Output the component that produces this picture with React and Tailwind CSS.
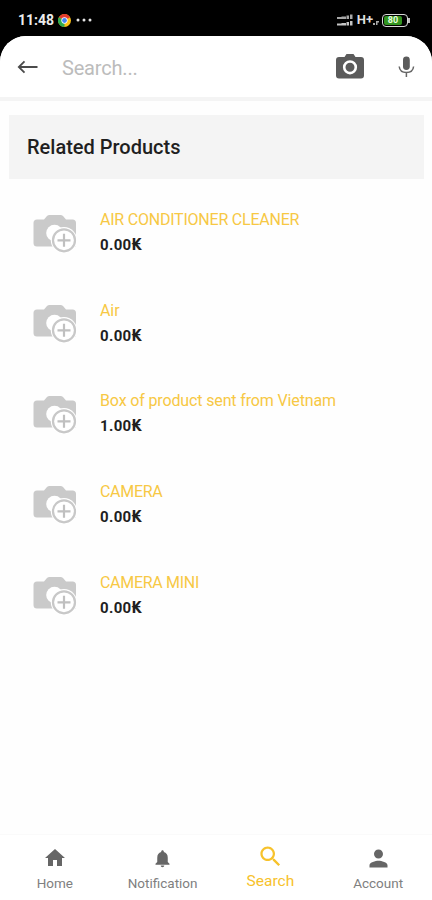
const products = [
  { name: "AIR CONDITIONER CLEANER", price: "0.00₭", spacing: "tracking-[-0.22px]" },
  { name: "Air", price: "0.00₭", spacing: "tracking-[-0.1px]" },
  { name: "Box of product sent from Vietnam", price: "1.00₭", spacing: "tracking-[-0.14px]" },
  { name: "CAMERA", price: "0.00₭", spacing: "tracking-[-0.3px]" },
  { name: "CAMERA MINI", price: "0.00₭", spacing: "tracking-[-0.3px]" },
];

function ChromeIcon() {
  return (
    <svg className="ml-1" width="13" height="13" viewBox="0 0 24 24">
      <circle cx="12" cy="12" r="12" fill="#fbc116" />
      <path d="M12 12 L1.6 6 A12 12 0 0 1 22.4 6 Z" fill="#e33b2e" />
      <path d="M12 12 L1.6 6 A12 12 0 0 0 12 24 Z" fill="#2da94f" />
      <circle cx="12" cy="12" r="5.8" fill="#fff" />
      <circle cx="12" cy="12" r="4.4" fill="#4285f4" />
    </svg>
  );
}

function StatusBar() {
  return (
    <div className="flex h-9 items-center pl-[18px] pr-[22px] pt-1 text-[#ececec]">
      <span className="w-9 whitespace-nowrap text-[14px] font-bold leading-4">11:48</span>
      <ChromeIcon />
      <svg className="ml-[5px]" width="17" height="4" viewBox="0 0 17 4" fill="#e6e6e6">
        <circle cx="2" cy="2" r="1.5" />
        <circle cx="8" cy="2" r="1.5" />
        <circle cx="14" cy="2" r="1.5" />
      </svg>
      <svg className="ml-auto" width="18" height="14" viewBox="0 0 18 14" fill="#c4c4c4">
        <path d="M0 4h4.500v2H0zM4.500 3.500H9V6H4.500zM9.500 2.500h2.500V6H9.500zM13 1.500h2.500V6H13z" opacity=".85" />
        <path d="M0 10.500h4.500v2H0zM4.500 10H9v2.500H4.500zM9.500 9H12v3.500H9.500zM13 8h2.500v4.500H13z" />
      </svg>
      <span className="ml-0.5 text-[13px] font-bold leading-4 text-[#dedede]">H+</span>
      <svg className="mt-1.5" width="6" height="6" viewBox="0 0 6 6" fill="#aaa">
        <path d="M0 3h2v2H0zM3 1h3v1.500H4.500V5H3z" />
      </svg>
      <div className="ml-[3px] flex items-center">
        <div className="flex h-[13px] w-[26px] rounded-[4px] border-[1.5px] border-[#d8d8d8] p-px">
          <div className="flex h-full w-[18px] items-center justify-center rounded-[2px] bg-[#32941f] text-[9px] font-bold leading-none text-[#e8ffdf]">80</div>
        </div>
        <div className="h-[5px] w-[2px] bg-[#bdbdbd]" />
      </div>
    </div>
  );
}

function SearchHeader() {
  return (
    <header className="flex h-[61px] items-center rounded-t-[26px] bg-white pl-[17px] pr-[16px]">
      <svg width="21" height="16" viewBox="0 0 21 16" fill="none" stroke="#4b4b4b" strokeWidth="1.8">
        <path d="M20.500 8H2M7.500 2.300L1.800 8l5.700 5.700" />
      </svg>
      <span className="ml-6 mt-0.5 text-[20px] leading-6 tracking-[-0.18px] text-[#bcbcbc]">Search...</span>
      <svg className="mb-0.5 ml-auto" width="28" height="26" viewBox="0 0 28 26">
        <path d="M3 4h5.500l2-3h7l2 3H25a3 3 0 0 1 3 3v15.500a3 3 0 0 1-3 3H3a3 3 0 0 1-3-3V7a3 3 0 0 1 3-3z" fill="#5b5b5b" />
        <circle cx="14" cy="14.300" r="5.800" fill="#5b5b5b" stroke="#fff" strokeWidth="2.600" />
      </svg>
      <svg className="ml-[34px]" width="18" height="22" viewBox="0 0 18 22">
        <rect x="5" y="0.500" width="6.800" height="13.500" rx="3.400" fill="#5b5b5b" />
        <path d="M1.200 10.500c.4 4 3.400 6 7.200 6s6.800-2 7.200-6M8.400 16.500V21" fill="none" stroke="#666" strokeWidth="1.500" />
      </svg>
    </header>
  );
}

function AddPhotoIcon() {
  return (
    <svg className="shrink-0" width="44" height="40" viewBox="0 0 44 40">
      <path d="M4 6.500h7l3-3.500Q15 2 16.500 2h11Q29 2 30 3l3 3.500h6.500A3.500 3.500 0 0 1 43 10v23.500H4A3.500 3.500 0 0 1 .5 30V10A3.500 3.500 0 0 1 4 6.500z" fill="#cacaca" />
      <circle cx="21.500" cy="20" r="8.300" fill="#fff" />
      <circle cx="31" cy="27.300" r="13.200" fill="#fff" />
      <circle cx="31" cy="27.300" r="11" fill="#fff" stroke="#c8c8c8" strokeWidth="2.200" />
      <path d="M31 20.800v13M24.500 27.300h13" stroke="#c0c0c0" strokeWidth="2.200" />
    </svg>
  );
}

function ProductRow({ name, price, spacing }) {
  return (
    <li className="flex h-[90.6px] items-center gap-[23px] pl-[33px]">
      <AddPhotoIcon />
      <div className="whitespace-nowrap">
        <div className={"text-[16px] leading-[25px] text-[#f7c844] " + spacing}>{name}</div>
        <div className="text-[15px] font-bold leading-[26px] tracking-[0.35px] text-[#1f1f1f]">{price}</div>
      </div>
    </li>
  );
}

const tabs = [
  { label: "Home", path: "M10 20v-6h4v6h5v-8h3L12 3 2 12h3v8z" },
  { label: "Notification", path: "M12 22c1.100 0 2-.9 2-2h-4c0 1.100.9 2 2 2zm6-6v-5c0-3.070-1.630-5.640-4.500-6.320V4c0-.83-.67-1.500-1.500-1.500s-1.500.67-1.500 1.500v.68C7.640 5.360 6 7.920 6 11v5l-2 2v1h16v-1l-2-2z" },
  { label: "Search", active: true, path: "M15.500 14h-.79l-.28-.27C15.410 12.590 16 11.110 16 9.500 16 5.910 13.090 3 9.500 3S3 5.910 3 9.500 5.910 16 9.500 16c1.610 0 3.090-.59 4.230-1.570l.27.28v.79l5 4.990L20.490 19l-4.990-5zm-6 0C7.010 14 5 11.990 5 9.500S7.010 5 9.500 5 14 7.010 14 9.500 11.990 14 9.500 14z" },
  { label: "Account", path: "M12 12c2.210 0 4-1.790 4-4s-1.790-4-4-4-4 1.790-4 4 1.790 4 4 4zm0 2c-2.670 0-8 1.340-8 4v2h16v-2c0-2.660-5.330-4-8-4z" },
];

const tabIconSizes = { Home: 24, Notification: 21, Search: 27, Account: 27 };

function TabBar() {
  return (
    <nav className="grid h-[66px] grid-cols-4 border-t border-[#fafafa] bg-white pl-px">
      {tabs.map((tab) => (
        <div
          key={tab.label}
          className={
            "flex flex-col items-center " +
            (tab.active ? "pt-[7px] text-[#f7c22b]" : "pt-[9px] text-[#666]")
          }
        >
          <div className="flex h-7 items-center justify-center">
            <svg width={tabIconSizes[tab.label]} height={tabIconSizes[tab.label]} viewBox="0 0 24 24" fill="currentColor">
              <path d={tab.path} />
            </svg>
          </div>
          <span className={tab.active ? "mt-0.5 text-[15.5px] leading-[18px]" : "mt-0.5 text-[13.5px] leading-[18px] text-[#808080]"}>{tab.label}</span>
        </div>
      ))}
    </nav>
  );
}

export default function App() {
  return (
    <div className="h-[900px] w-[432px] overflow-hidden bg-black font-['Roboto','DejaVu_Sans',sans-serif]">
      <StatusBar />
      <div className="flex h-[864px] flex-col rounded-t-[26px] bg-[#fefefe]">
        <SearchHeader />
        <div className="h-1 bg-[#f4f4f4]" />
        <main className="flex-1">
          <h1 className="ml-[9px] mr-2 mt-[14px] flex h-16 items-center bg-[#f4f4f4] pl-[18px] text-[20px] font-medium text-[#1f1f1f]">Related Products</h1>
          <ul className="pt-[8.4px]">
            {products.map((p) => (
              <ProductRow key={p.name} {...p} />
            ))}
          </ul>
        </main>
        <TabBar />
      </div>
    </div>
  );
}
